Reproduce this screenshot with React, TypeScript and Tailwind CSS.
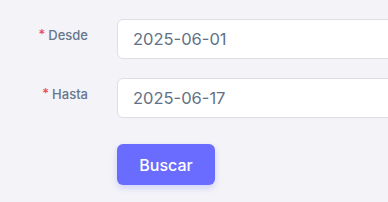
export default function App() {
  return (
    <div
      className="h-[202px] w-[388px] overflow-hidden bg-[#f3f3f8] pt-[19px]"
      style={{ fontFamily: "Inter, 'Liberation Sans', sans-serif" }}
    >
      <div className="flex flex-col gap-[19px]">
        <Row label="Desde" value="2025-06-01" />
        <Row label="Hasta" value="2025-06-17" />
      </div>
      <div className="mt-[26px] pl-[117px]">
        <button className="h-[41px] w-[98px] rounded-[6px] bg-[#6a6cff] text-[16px] font-medium text-white shadow-[0_3px_6px_rgba(106,108,255,0.25)]">
          Buscar
        </button>
      </div>
    </div>
  );
}

function Row({ label, value }: { label: string; value: string }) {
  return (
    <div className="flex items-start">
      <label className="flex h-[34px] w-[88px] shrink-0 items-center justify-end text-[13px] font-medium text-[#66768b]">
        <span className="mr-[3px] -translate-y-[1px] text-[#f04a4a]">*</span>
        {label}
      </label>
      <div className="ml-[29px] flex h-[40px] w-[320px] shrink-0 items-center rounded-[6px] border border-[#dcdfe6] bg-white pl-[15px] text-[16.5px] text-[#627186]">
        {value}
      </div>
    </div>
  );
}
